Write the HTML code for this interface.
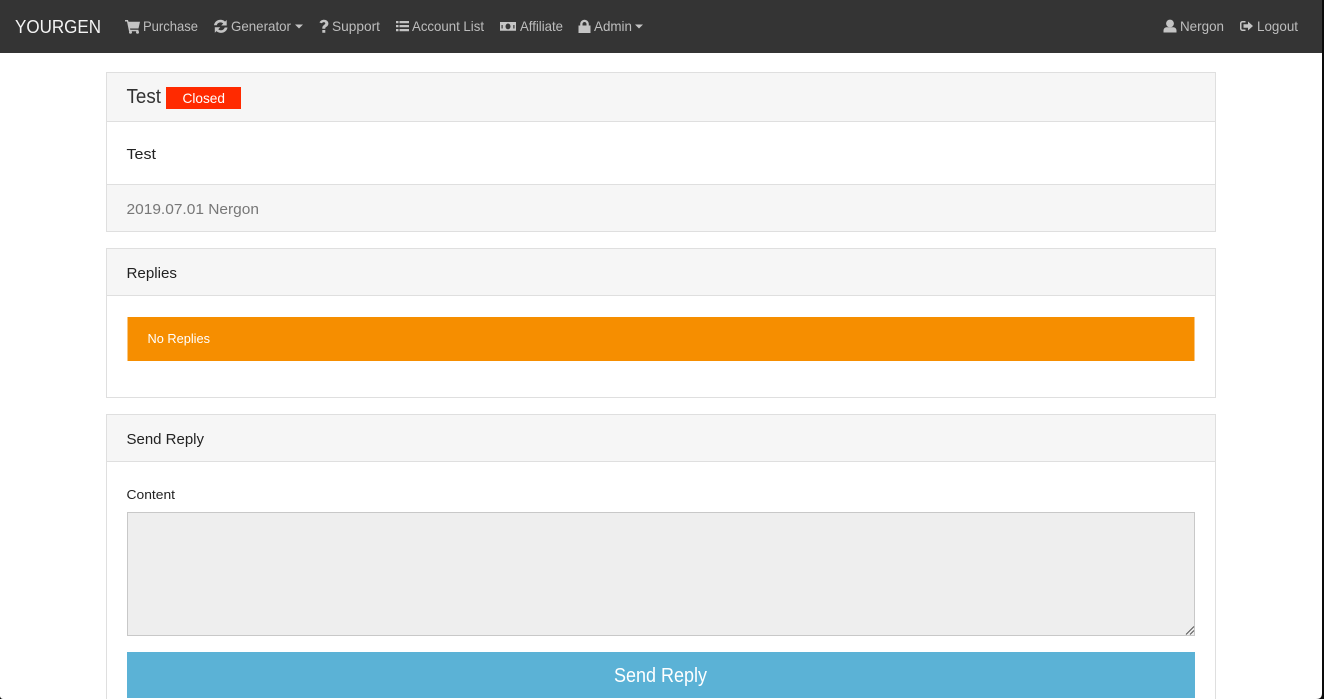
<!DOCTYPE html>
<html>
<head>
<meta charset="utf-8">
<title>YOURGEN</title>
<style>
html,body{margin:0;padding:0;width:1324px;height:699px;overflow:hidden;background:#fff}
svg{display:block}
text{font-family:"Liberation Sans",sans-serif}
.n{fill:#bdbdbd;font-size:14px}
.i{fill:#c4c4c4}
</style>
</head>
<body>
<svg width="1324" height="699" viewBox="0 0 1324 699" xmlns="http://www.w3.org/2000/svg">
<rect width="1324" height="699" fill="#fff"/>
<!-- navbar -->
<rect width="1322" height="53" fill="#343434"/>
<text x="15" y="33" font-size="18.500" fill="#f4f4f4" textLength="86" lengthAdjust="spacingAndGlyphs">YOURGEN</text>

<path class="i" d="M125 20h3l.5 1.800h11.500l-1.500 6.700h-8.500l.3 1.200h8.200v1.500h-9.500l-2-9.700h-2z"/>
<circle class="i" cx="130.500" cy="32.300" r="1.500"/><circle class="i" cx="137.500" cy="32.300" r="1.500"/>
<text class="n" x="143" y="31" textLength="55" lengthAdjust="spacingAndGlyphs">Purchase</text>

<path class="i" d="M214 25.200c.5-3.200 3.200-5.400 6.500-5.400 1.800 0 3.400.7 4.500 1.800l1.700-1.600v5.500h-5.500l2-2c-.7-.7-1.700-1.100-2.700-1.100-1.800 0-3.200 1.100-3.700 2.800zM227.500 27.500c-.5 3.200-3.200 5.400-6.500 5.400-1.800 0-3.400-.7-4.500-1.800l-1.700 1.600v-5.500h5.500l-2 2c.7.7 1.700 1.100 2.700 1.100 1.800 0 3.200-1.100 3.700-2.800z"/>
<text class="n" x="231" y="31" textLength="60" lengthAdjust="spacingAndGlyphs">Generator</text>
<path class="i" d="M295 24.500h8l-4 4z"/>

<path class="i" d="M319.500 22.500c.8-1.600 2.400-2.700 4.500-2.700 2.500 0 4.400 1.600 4.400 3.700 0 1.800-1 2.700-2.100 3.400-.7.500-1 .8-1 1.500v.4h-3v-.8c0-1.400.6-2.100 1.700-3 .8-.6 1.300-1 1.300-1.700 0-.7-.6-1.200-1.400-1.200-.8 0-1.400.4-2 1.200zM322.300 30h3v2.800h-3z"/>
<text class="n" x="332" y="31" textLength="48" lengthAdjust="spacingAndGlyphs">Support</text>

<path class="i" d="M396 21h2.500v2.200H396zM399.500 21H409v2.200h-9.500zM396 25h2.500v2.200H396zM399.500 25H409v2.200h-9.500zM396 29h2.500v2.200H396zM399.500 29H409v2.200h-9.500z"/>
<text class="n" x="412" y="31" textLength="72" lengthAdjust="spacingAndGlyphs">Account List</text>

<path class="i" fill-rule="evenodd" d="M500 22h16v8.800h-16zM505.500 26.400a2.500 2.900 0 1 0 5 0a2.500 2.900 0 1 0-5 0zM501.500 25v3.500h1.200V25zM513.300 25v3.500h1.200V25z"/>
<text class="n" x="520" y="31" textLength="43" lengthAdjust="spacingAndGlyphs">Affiliate</text>

<path class="i" fill-rule="evenodd" d="M578.500 25.500h1.700v-1.500c0-2.400 1.900-4.300 4.300-4.300s4.300 1.900 4.300 4.300v1.500h1.700v7.500h-12zM582.500 25.500h4V24c0-1.100-.9-2-2-2s-2 .9-2 2z"/>
<text class="n" x="594" y="31" textLength="38" lengthAdjust="spacingAndGlyphs">Admin</text>
<path class="i" d="M635 24.500h8l-4 4z"/>

<circle class="i" cx="1170" cy="23.500" r="3.900"/>
<path class="i" d="M1163.500 32.500v-2c0-2 1.500-3.300 3.300-3.300h6.400c1.800 0 3.300 1.300 3.300 3.300v2z"/>
<text class="n" x="1180" y="31" textLength="44" lengthAdjust="spacingAndGlyphs">Nergon</text>

<path class="i" d="M1245.500 21h-3c-1.400 0-2.500 1.100-2.500 2.500v5c0 1.400 1.100 2.500 2.500 2.500h3v-1.500h-3c-.6 0-1-.4-1-1v-5c0-.6.400-1 1-1h3zM1248 21.500l5 4.500-5 4.500v-2.700h-4.500v-3.600h4.500z"/>
<text class="n" x="1257" y="31" textLength="41" lengthAdjust="spacingAndGlyphs">Logout</text>

<!-- card 1 -->
<rect x="106.500" y="72.500" width="1109" height="159" fill="#fff" stroke="#dfdfdf"/>
<rect x="107" y="73" width="1108" height="48.500" fill="#f6f6f6"/>
<path d="M107 121.500h1108" stroke="#dfdfdf"/>
<rect x="107" y="185" width="1108" height="46" fill="#f6f6f6"/>
<path d="M107 184.500h1108" stroke="#dfdfdf"/>
<text x="126.500" y="103" font-size="20" fill="#333" textLength="34.500" lengthAdjust="spacingAndGlyphs">Test</text>
<rect x="166" y="87" width="75" height="22" fill="#ff2a00"/>
<text x="182.500" y="103" font-size="14" fill="#fff" textLength="42.500" lengthAdjust="spacingAndGlyphs">Closed</text>
<text x="126.500" y="159" font-size="15" fill="#222" textLength="29.500" lengthAdjust="spacingAndGlyphs">Test</text>
<text x="126.500" y="214" font-size="15" fill="#777" textLength="132.500" lengthAdjust="spacingAndGlyphs">2019.07.01 Nergon</text>

<!-- card 2 -->
<rect x="106.500" y="248.500" width="1109" height="149" fill="#fff" stroke="#dfdfdf"/>
<rect x="107" y="249" width="1108" height="46.500" fill="#f6f6f6"/>
<path d="M107 295.500h1108" stroke="#dfdfdf"/>
<text x="126.500" y="278" font-size="15" fill="#222" textLength="50.500" lengthAdjust="spacingAndGlyphs">Replies</text>
<rect x="127.500" y="317" width="1067" height="44" fill="#f68e00"/>
<text x="147.500" y="343" font-size="13" fill="#fff" textLength="62.500" lengthAdjust="spacingAndGlyphs">No Replies</text>

<!-- card 3 -->
<rect x="106.500" y="414.500" width="1109" height="300" fill="#fff" stroke="#dfdfdf"/>
<rect x="107" y="415" width="1108" height="46.500" fill="#f6f6f6"/>
<path d="M107 461.500h1108" stroke="#dfdfdf"/>
<text x="126.500" y="444" font-size="15" fill="#222" textLength="77.500" lengthAdjust="spacingAndGlyphs">Send Reply</text>
<text x="126.500" y="499" font-size="13" fill="#222" textLength="48.500" lengthAdjust="spacingAndGlyphs">Content</text>
<rect x="127.500" y="512.500" width="1067" height="123" fill="#eee" stroke="#c8c8c8"/>
<path d="M1186 634.500l8-8M1190 634.500l4-4" stroke="#555" stroke-width="1" fill="none"/>
<rect x="127" y="652" width="1068" height="46" fill="#5bb2d6"/>
<text x="614" y="682" font-size="20" fill="#fff" textLength="93" lengthAdjust="spacingAndGlyphs">Send Reply</text>

<!-- window edge -->
<rect x="1322" y="0" width="2" height="699" fill="#0a0a0a"/>
<path d="M1324 691v8h-8c4.500 0 6-2 6-6v-2z" fill="#0a0a0a"/>
<path d="M0 696v3h3c-1.500 0-3-1.500-3-3z" fill="#0a0a0a"/>
</svg>
</body>
</html>
